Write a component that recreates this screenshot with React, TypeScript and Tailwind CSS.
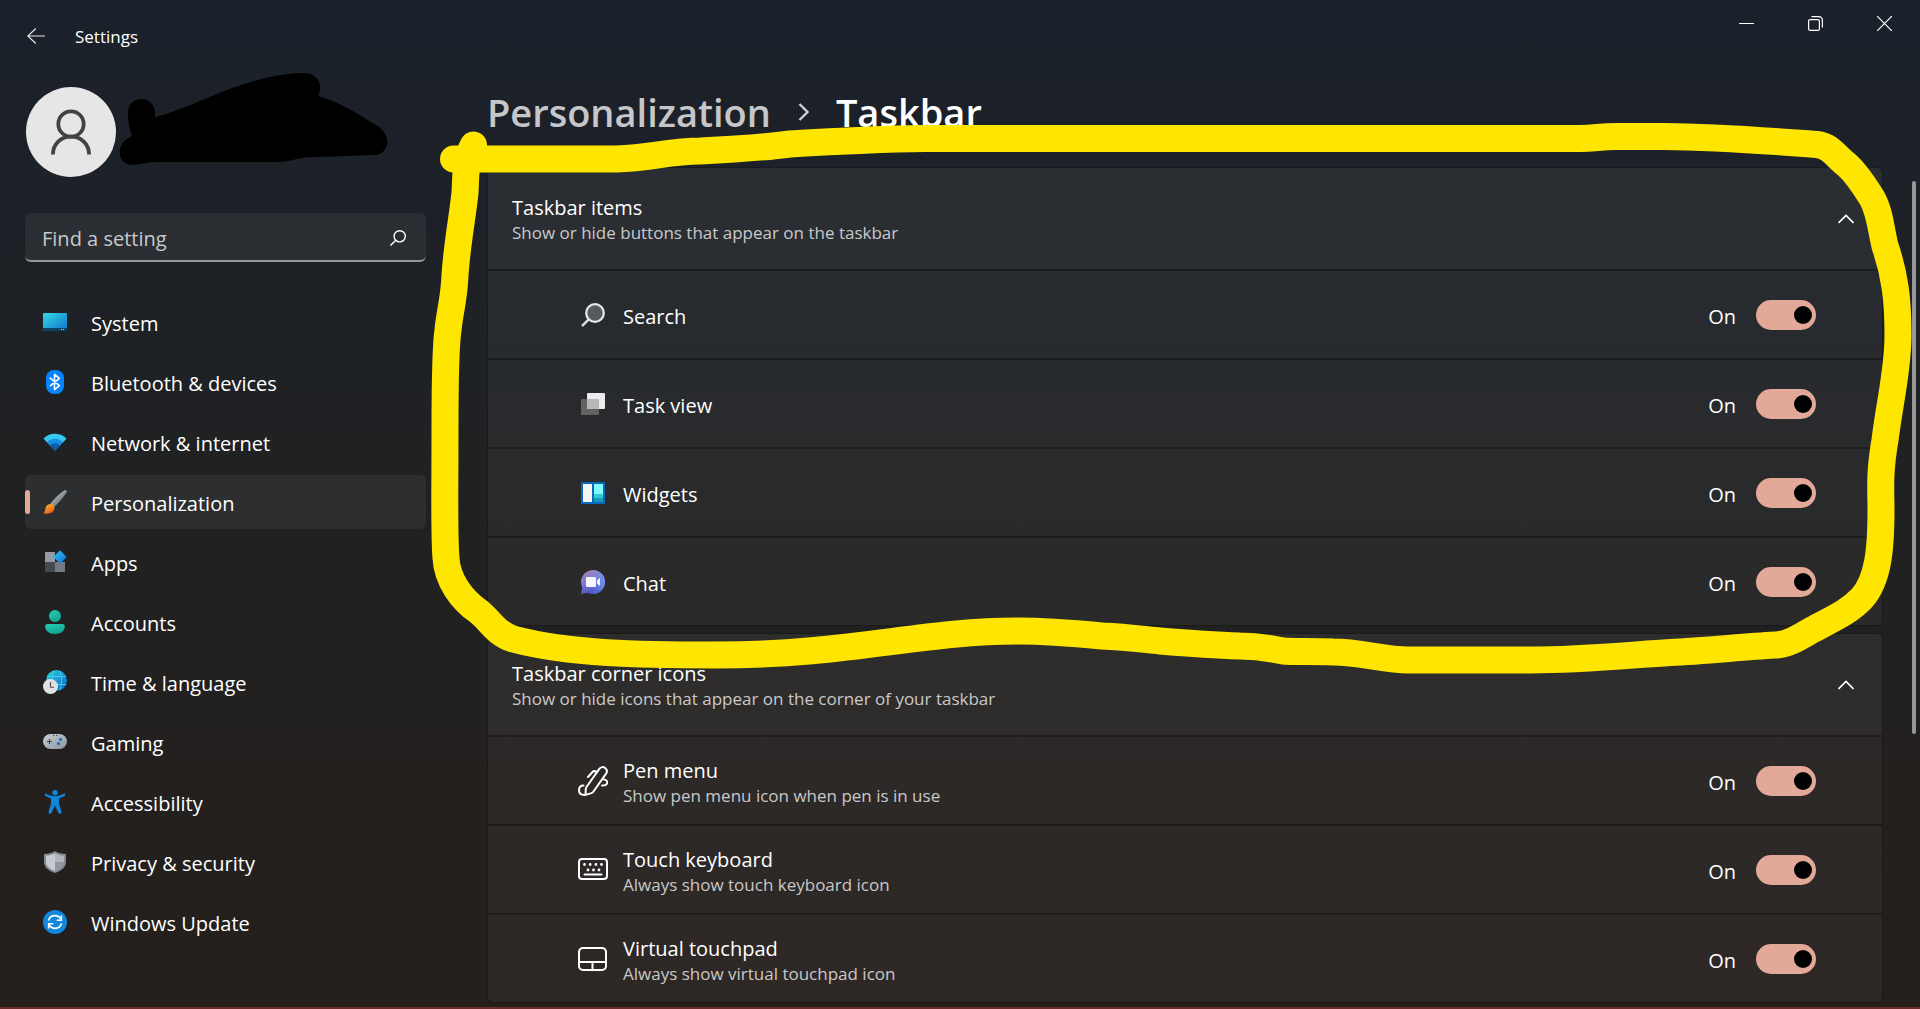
import { useState, type ReactNode } from "react";

/* ---------- Sidebar icons ---------- */

const SystemIcon = () => (
    <svg width="24" height="24" viewBox="0 0 24 24" aria-hidden="true">
        <defs>
            <linearGradient id="sys" x1="0" y1="0" x2="1" y2="1">
                <stop offset="0" stopColor="#35dbe6" />
                <stop offset="1" stopColor="#0f6fc9" />
            </linearGradient>
        </defs>
        <rect y="3" width="24" height="18" rx="1" fill="url(#sys)" />
        <path d="M0 18h24v2a1 1 0 0 1-1 1H1a1 1 0 0 1-1-1z" fill="#0b4468" />
        <path d="M18 19h1v1h-1zM20 19h1v1h-1z" fill="#9fd4ee" />
    </svg>
);

const BluetoothIcon = () => (
    <svg width="24" height="24" viewBox="0 0 24 24" aria-hidden="true">
        <rect x="3" width="18" height="24" rx="8" fill="#0783ff" />
        <path d="M7.2 8.2l9.2 7.4-4.9 4V4.4l4.9 4-9.2 7.4" fill="none" stroke="#fff" strokeWidth="1.5" strokeLinejoin="round" strokeLinecap="round" />
    </svg>
);

const NetworkIcon = () => (
    <svg width="24" height="24" viewBox="0 0 24 24" aria-hidden="true">
        <path d="M.5 8.7C3.3 5.4 7.4 3.7 12 3.7s8.7 1.7 11.5 5L12 20.6z" fill="#38c8f4" />
        <path d="M4 12.3C6 9.9 8.8 8.7 12 8.7s6 1.2 8 3.6l-8 8.3z" fill="#1590e0" />
        <path d="M7.3 15.7c1.2-1.6 2.8-2.4 4.7-2.4s3.5.8 4.7 2.4L12 20.6z" fill="#0c5aa8" />
    </svg>
);

const BrushIcon = () => (
    <svg width="24" height="24" viewBox="0 0 24 24" aria-hidden="true">
        <defs>
            <linearGradient id="handle" x1="0" y1="0" x2="1" y2="1">
                <stop offset="0.3" stopColor="#a9b1b9" />
                <stop offset="0.8" stopColor="#606b76" />
            </linearGradient>
            <linearGradient id="tip" x1="0" y1="0" x2="0.6" y2="1">
                <stop offset="0" stopColor="#ffc233" />
                <stop offset="1" stopColor="#ee5a1c" />
            </linearGradient>
        </defs>
        <path d="M7.5 13.5C11.5 8.5 16.5 3.5 21.5.2c1.3-.6 2.8.7 2.2 2.1C20.6 7.5 16 12.5 11.2 17z" fill="url(#handle)" />
        <path d="M7 14c2.4-.6 4.9 1.7 4.5 4.6C11 22.5 6.5 24.5.3 23.3c1.9-1.1 1.5-3 2.2-5.3C3.2 15.8 4.8 14.3 7 14z" fill="url(#tip)" />
    </svg>
);

const AppsIcon = () => (
    <svg width="24" height="24" viewBox="0 0 24 24" aria-hidden="true">
        <defs>
            <linearGradient id="diamond" x1="0" y1="0" x2="1" y2="1">
                <stop offset="0" stopColor="#35c4f5" />
                <stop offset="1" stopColor="#0b6fd2" />
            </linearGradient>
        </defs>
        <path d="M3 2h9v10H2V3a1 1 0 0 1 1-1z" fill="#959ba5" />
        <path d="M2 12h10v10H3a1 1 0 0 1-1-1z" fill="#454a50" />
        <path d="M12 12h10v9a1 1 0 0 1-1 1h-9z" fill="#747b84" />
        <path d="M17 .3l6.7 6.7L17 13.7 10.3 7z" fill="url(#diamond)" />
    </svg>
);

const AccountsIcon = () => (
    <svg width="24" height="24" viewBox="0 0 24 24" aria-hidden="true">
        <defs>
            <linearGradient id="person" x1="0" y1="0" x2="0.5" y2="1">
                <stop offset="0" stopColor="#25cdb6" />
                <stop offset="1" stopColor="#13a48f" />
            </linearGradient>
        </defs>
        <circle cx="12" cy="6" r="6" fill="url(#person)" />
        <path d="M4.5 14h15a2.3 2.3 0 0 1 2.3 2.3C21.8 21 18 24 12 24s-9.8-3-9.8-7.7A2.3 2.3 0 0 1 4.5 14z" fill="url(#person)" />
    </svg>
);

const TimeIcon = () => (
    <svg width="24" height="24" viewBox="0 0 24 24" aria-hidden="true">
        <defs>
            <linearGradient id="globe" x1="0" y1="0" x2="1" y2="1">
                <stop offset="0" stopColor="#2fd0da" />
                <stop offset="1" stopColor="#0b67cc" />
            </linearGradient>
        </defs>
        <circle cx="13.5" cy="10.5" r="10.5" fill="url(#globe)" />
        <path d="M4 6.5h19M4 14.5h19M10.5 1c-2 6-2 13 0 19M17 1c2 6 2 13 0 19" fill="none" stroke="#3fdcec" strokeWidth="1" opacity=".8" />
        <circle cx="7.5" cy="16.5" r="7.5" fill="#dfe0e2" />
        <path d="M7.5 12v5.2h3.5" fill="none" stroke="#4a4d52" strokeWidth="1.1" />
    </svg>
);

const GamingIcon = () => (
    <svg width="24" height="24" viewBox="0 0 24 24" aria-hidden="true">
        <defs>
            <linearGradient id="pad" x1="0" y1="0" x2="1" y2="1">
                <stop offset="0" stopColor="#c8ced4" />
                <stop offset="1" stopColor="#8d949c" />
            </linearGradient>
        </defs>
        <rect y="4" width="24" height="15" rx="7.5" fill="url(#pad)" />
        <path d="M4 11.5h5M6.5 9v5" stroke="#3b3f44" strokeWidth="1.1" />
        <path d="M10 5h1.2v1H10zM13 5h1.2v1H13z" fill="#3b3f44" />
        <circle cx="17.5" cy="9.5" r="1.6" fill="#0a74d4" />
        <circle cx="15.5" cy="13.5" r="1.6" fill="#0a74d4" />
    </svg>
);

const AccessibilityIcon = () => (
    <svg width="24" height="24" viewBox="0 0 24 24" fill="#0f86dc" aria-hidden="true">
        <circle cx="12" cy="2.7" r="2.7" />
        <path d="M3.2 3.7C6 5 9 6.2 12 6.2s6-1.2 8.8-2.5c1.3-.5 2 1.5.8 2.2L16 8.5v5l2.4 8.3c.5 1.9-2.2 2.9-3 1L12.3 16h-.6l-3.1 6.8c-.8 1.9-3.5.9-3-1L8 13.5v-5L2.4 5.9C1.2 5.2 1.9 3.2 3.2 3.7z" />
    </svg>
);

const ShieldIcon = () => (
    <svg width="24" height="24" viewBox="0 0 24 24" aria-hidden="true">
        <path d="M12 1c3.2 2.2 6.8 3 11 3v7.5c0 5.5-4 9.2-11 11.5C5 20.7 1 17 1 11.5V4c4.2 0 7.8-.8 11-3z" fill="#858b92" />
        <path d="M12 3.3c2.8 1.7 5.6 2.4 9 2.5V12H12z" fill="#b0b5bb" />
        <path d="M12 3.3C9.2 5 6.4 5.7 3 5.8v5.7c0 4.3 3 7.4 9 9.5z" fill="#c6cbd2" />
        <path d="M12 12h9c-.2 4.3-3.3 7.1-9 9z" fill="#93989f" />
    </svg>
);

const UpdateIcon = () => (
    <svg width="24" height="24" viewBox="0 0 24 24" aria-hidden="true">
        <circle cx="12" cy="12" r="12" fill="#0f88de" />
        <path d="M5.5 10.5C6.4 7.5 9 5.7 12 5.7c2.6 0 4.7 1.2 6 3.3M18.5 13.5c-.9 3-3.5 4.8-6.5 4.8-2.6 0-4.7-1.2-6-3.3" fill="none" stroke="#fff" strokeWidth="1.7" />
        <path d="M18.4 5.5v4.7h-4.7M5.6 18.5v-4.7h4.7" fill="none" stroke="#fff" strokeWidth="1.5" />
    </svg>
);

/* ---------- Row icons ---------- */

const SearchItemIcon = () => (
    <svg width="24" height="24" viewBox="0 0 24 24" aria-hidden="true">
        <path d="M1.7 22.3l6.5-6.5" stroke="#d9d9da" strokeWidth="2.6" strokeLinecap="round" />
        <circle cx="14" cy="10" r="8.8" fill="#575a61" stroke="#e8e8e9" strokeWidth="2.3" />
    </svg>
);

const TaskViewIcon = () => (
    <svg width="24" height="24" viewBox="0 0 24 24" aria-hidden="true">
        <rect x="6" y="1" width="18" height="16" rx="1" fill="#ececee" />
        <rect x="0" y="7" width="18" height="16" rx="1" fill="#626262" />
        <path d="M6 7h12v10H6z" fill="#b8b8b9" />
    </svg>
);

const WidgetsIcon = () => (
    <svg width="24" height="24" viewBox="0 0 24 24" aria-hidden="true">
        <rect y="1" width="24" height="22" rx="1" fill="#0a69bb" />
        <rect x="2" y="3" width="9" height="18" rx=".5" fill="#f4f4f5" />
        <path d="M13 3h9v10h-9z" fill="#7ffbff" />
        <path d="M13 13h9v4h-9z" fill="#30c9d8" />
        <path d="M13 17h9v4h-9z" fill="#149bb5" />
    </svg>
);

const ChatIcon = () => (
    <svg width="24" height="24" viewBox="0 0 24 24" aria-hidden="true">
        <defs>
            <linearGradient id="bubble" x1="0.2" y1="0" x2="0.6" y2="1">
                <stop offset="0" stopColor="#a585bb" />
                <stop offset="0.5" stopColor="#7a78cf" />
                <stop offset="1" stopColor="#4546bd" />
            </linearGradient>
            <linearGradient id="bubbleEdge" x1="0.4" y1="0" x2="1" y2="0">
                <stop offset="0" stopColor="#6f9cf2" stopOpacity="0" />
                <stop offset="1" stopColor="#6f9cf2" />
            </linearGradient>
        </defs>
        <path d="M12 0a12 12 0 1 1-5.4 22.7L0 24l1.3-6.6A12 12 0 0 1 12 0z" fill="url(#bubble)" />
        <circle cx="12" cy="12" r="12" fill="url(#bubbleEdge)" opacity=".8" />
        <rect x="5" y="7" width="10" height="10" rx="1.3" fill="#f6f5fb" />
        <path d="M16 10.5L19 8v8l-3-2.5z" fill="#f6f5fb" />
    </svg>
);

const PenIcon = () => (
    <svg width="30" height="30" viewBox="0 0 30 30" fill="none" stroke="#fff" strokeWidth="2" strokeLinecap="round" strokeLinejoin="round" aria-hidden="true">
        <path d="M8.5 21L21.3 2.8c1.5-2 4-2.2 5.8-.8s2.2 3.8 1 5.6L15.5 25.5c-.5.8-1.2 1.3-2 1.6L7.5 28.9l.3-6.2c0-.6.3-1.2.7-1.7z" />
        <path d="M10 11l4.500-5c1-1.100 2.600-1 4-.2M26 13.500c3 .3 4 2.500 2.700 4.500-.8 1.300-2.700 1.700-4.700 1.400M5.500 19.500C2.800 19.500 1 21.500 1 24.300s2 4.600 5.500 4.600" />
    </svg>
);

const KeyboardIcon = () => (
    <svg width="30" height="30" viewBox="0 0 30 30" fill="none" stroke="#fff" strokeLinecap="round" aria-hidden="true">
        <rect x="1" y="4" width="28" height="20" rx="3" strokeWidth="2" />
        <path d="M6.5 19.5h17" strokeWidth="2" />
        <path d="M6.5 9.5h.01M12.2 9.5h.01M17.9 9.5h.01M23.5 9.5h.01M10 15h.01M15.5 15h.01M21 15h.01" strokeWidth="2.8" />
    </svg>
);

const TouchpadIcon = () => (
    <svg width="30" height="30" viewBox="0 0 30 30" fill="none" stroke="#fff" strokeWidth="2" aria-hidden="true">
        <rect x="1" y="4" width="27" height="22" rx="4" />
        <path d="M1 18h27M14.5 18v8" />
    </svg>
);

/* ---------- Data ---------- */

type Item = {
    icon: ReactNode;
    title: string;
    description?: string;
};

const navItems: Item[] = [
    { icon: <SystemIcon />, title: "System" },
    { icon: <BluetoothIcon />, title: "Bluetooth & devices" },
    { icon: <NetworkIcon />, title: "Network & internet" },
    { icon: <BrushIcon />, title: "Personalization" },
    { icon: <AppsIcon />, title: "Apps" },
    { icon: <AccountsIcon />, title: "Accounts" },
    { icon: <TimeIcon />, title: "Time & language" },
    { icon: <GamingIcon />, title: "Gaming" },
    { icon: <AccessibilityIcon />, title: "Accessibility" },
    { icon: <ShieldIcon />, title: "Privacy & security" },
    { icon: <UpdateIcon />, title: "Windows Update" },
];

const taskbarItems: Item[] = [
    { icon: <SearchItemIcon />, title: "Search" },
    { icon: <TaskViewIcon />, title: "Task view" },
    { icon: <WidgetsIcon />, title: "Widgets" },
    { icon: <ChatIcon />, title: "Chat" },
];

const cornerIcons: Item[] = [
    { icon: <PenIcon />, title: "Pen menu", description: "Show pen menu icon when pen is in use" },
    { icon: <KeyboardIcon />, title: "Touch keyboard", description: "Always show touch keyboard icon" },
    { icon: <TouchpadIcon />, title: "Virtual touchpad", description: "Always show virtual touchpad icon" },
];

/* ---------- Components ---------- */

function SettingRow({ icon, title, description }: Item) {
    const [on, setOn] = useState(true);

    return (
        <label className="flex h-[87px] items-center bg-white/6 pl-[90px] pr-[66px]">
            <span className="flex w-[30px] justify-center">{icon}</span>
            <span className="flex flex-1 flex-col pl-[15px] pt-1">
                <span className="text-[20px] leading-[26px]">{title}</span>
                {description && (
                    <span className="text-[17px] leading-6 text-white/75">{description}</span>
                )}
            </span>
            <span className="pr-5 pt-1 text-[20px] leading-[26px]">{on ? "On" : "Off"}</span>
            <input
                type="checkbox"
                role="switch"
                checked={on}
                onChange={(e) => setOn(e.target.checked)}
                className="flex h-[30px] w-[60px] appearance-none items-center rounded-full border border-white/60 px-1 before:size-[18px] before:rounded-full before:bg-white/80 checked:justify-end checked:border-0 checked:bg-[#e2a999] checked:before:bg-black"
            />
        </label>
    );
}

function SettingGroup({ title, description, items }: { title: string; description: string; items: Item[] }) {
    const [open, setOpen] = useState(true);

    return (
        <section className="flex flex-col gap-0.5 overflow-hidden rounded-md border border-black/10 bg-black/10">
            <button
                type="button"
                aria-expanded={open}
                onClick={() => setOpen(!open)}
                className="flex h-[101px] items-center justify-between bg-white/7 pl-6 pr-7 text-left"
            >
                <span className="flex flex-col pt-0.5">
                    <span className="text-[20px] leading-[26px]">{title}</span>
                    <span className="text-[17px] leading-6 text-white/75">{description}</span>
                </span>
                <svg
                    width="16"
                    height="10"
                    viewBox="0 0 16 10"
                    fill="none"
                    stroke="#fff"
                    strokeWidth="1.6"
                    className={open ? "" : "rotate-180"}
                    aria-hidden="true"
                >
                    <path d="M.5 9L8 1.5 15.5 9" />
                </svg>
            </button>
            {open && items.map((item) => <SettingRow key={item.title} {...item} />)}
        </section>
    );
}

function TitleBar() {
    const control = "flex h-[47px] w-[69px] items-center justify-center hover:bg-white/10";

    return (
        <header className="flex h-[72px] items-center">
            <button type="button" aria-label="Back" className="ml-[27px] flex h-[30px] w-[18px] items-center">
                <svg width="18" height="16" viewBox="0 0 18 16" fill="none" stroke="#e4e5e6" strokeWidth="1.2" aria-hidden="true">
                    <path d="M18 8H.8M8.8.5L.8 8l8 7.5" />
                </svg>
            </button>
            <h1 className="flex-1 pl-[30px] pt-0.5 text-[17px] leading-6">Settings</h1>
            <div className="mr-px flex self-start">
                <button type="button" aria-label="Minimize" className={control}>
                    <svg width="15" height="15" viewBox="0 0 15 15" stroke="#fff" aria-hidden="true">
                        <path d="M0 7.5h15" />
                    </svg>
                </button>
                <button type="button" aria-label="Restore" className={control}>
                    <svg width="15" height="15" viewBox="0 0 15 15" fill="none" stroke="#fff" strokeWidth="1.2" aria-hidden="true">
                        <rect x=".6" y="3.6" width="10.8" height="10.8" rx="1.5" />
                        <path d="M3.5 .6h7.4a3.5 3.5 0 0 1 3.5 3.5v7.4" />
                    </svg>
                </button>
                <button type="button" aria-label="Close" className={control}>
                    <svg width="15" height="15" viewBox="0 0 15 15" stroke="#fff" strokeWidth="1.2" aria-hidden="true">
                        <path d="M0 0l15 15M15 0L0 15" />
                    </svg>
                </button>
            </div>
        </header>
    );
}

function Sidebar() {
    const [active, setActive] = useState("Personalization");

    return (
        <aside className="w-[401px] shrink-0 pt-[15px]">
            <div className="ml-px flex size-[90px] items-center justify-center rounded-full bg-[#e6e6e6]">
                <svg width="40" height="46" viewBox="0 0 40 46" fill="none" stroke="#424242" strokeWidth="3.8" aria-hidden="true">
                    <circle cx="20" cy="15" r="12.7" />
                    <path d="M1.9 45.5C1.9 35 10 27.7 20 27.7S38.1 35 38.1 45.5" />
                </svg>
            </div>

            <div className="mt-9 flex h-[49px] items-center rounded-md border-b-2 border-[#96989b] bg-white/6 pl-[17px] pr-5">
                <input
                    type="text"
                    aria-label="Find a setting"
                    placeholder="Find a setting"
                    className="min-w-0 flex-1 bg-transparent pt-1 text-[20px] leading-[26px] outline-none placeholder:text-white/75"
                />
                <svg width="16" height="16" viewBox="0 0 16 16" fill="none" stroke="#fff" strokeWidth="1.4" className="mt-0.5" aria-hidden="true">
                    <circle cx="9.7" cy="6.3" r="5.6" />
                    <path d="M.5 15.5l5-5" />
                </svg>
            </div>

            <nav className="mt-[33px] flex flex-col gap-1.5">
                {navItems.map((item) => (
                    <a
                        key={item.title}
                        href="#"
                        onClick={(e) => {
                            e.preventDefault();
                            setActive(item.title);
                        }}
                        className={`flex h-[54px] items-center rounded-md ${active === item.title ? "bg-white/6" : "hover:bg-white/5"}`}
                    >
                        <span className={`h-6 w-[5px] rounded-full ${active === item.title ? "bg-[#e2a999]" : ""}`} />
                        <span className="pl-[13px]">{item.icon}</span>
                        <span className="pl-6 pt-1 text-[20px] leading-[26px]">{item.title}</span>
                    </a>
                ))}
            </nav>
        </aside>
    );
}

/* Marker strokes drawn over the window */
function MarkerOverlay() {
    return (
        <svg viewBox="0 0 1920 1009" className="pointer-events-none absolute left-0 top-0 w-full" fill="none" aria-hidden="true">
            <path
                d="M128 113C128 104 134 99 141.5 99S155 105 155 113V117C180 111 205 98 232 88C260 78 285 73 304 73C317 73 324 84 318 96C340 102 360 115 379 127C393 138 388 155 374 155L305 157.5C295 159 288 162 278 162H155C147 162 140 165 132 165C116 164 115 143 132 136C129 128 128 121 128 113Z"
                fill="#000"
            />
            <path
                d="M453.5 159H617C650 158 670 151 700 151C740 149 760 148 790 144C840 141 880 139 925 138.5H1580C1595 138.5 1600 136.5 1616 136.5H1664C1720 137 1770 141 1817 144.5C1831 146 1836 157 1847 165C1858 175 1865 187 1872 198C1880 212 1881 230 1885 246C1895 275 1898 300 1898 335C1898 370 1890 400 1885 440C1879 475 1881 490 1881 510C1881 550 1878 580 1862 598C1848 613 1830 620 1812 630C1800 637 1788 645 1775 645C1740 647 1705 651 1670 652.5C1630 655 1580 660 1531 660H1408C1385 660 1360 652 1333 652C1310 651 1295 652 1283 651C1270 649 1262 646 1240 646C1213 645 1185 643 1160 641C1140 639 1125 637 1102 636C1070 633 1045 631 1019 631C920 631 850 655 715 655C640 655 570 654 513 639C495 633 490 620 478 611C462 600 447 580 446 558C444 535 445 500 445 430C445 390 445 350 448 330C450 310 454 300 455 275C457 245 462 220 465 193C466 175 465 160 473.5 145"
                stroke="#ffe600"
                strokeWidth="27"
                strokeLinecap="round"
                strokeLinejoin="round"
            />
        </svg>
    );
}

export default function App() {
    return (
        <div className="relative flex min-h-screen flex-col overflow-hidden border-b-2 border-[#6b2d2a] bg-linear-to-b from-[#1b212b] via-[#202122] to-[#251f1b] font-['Open_Sans','Noto_Sans',sans-serif] text-white">
            <TitleBar />

            <div className="flex flex-1 pl-[25px] pr-[37px]">
                <Sidebar />

                <main className="flex-1 pb-1 pl-[61px] pt-2.5">
                    <h2 className="flex h-[60px] items-center text-[38px] font-semibold leading-[60px]">
                        <a href="#" className="text-white/75">Personalization</a>
                        <svg width="11" height="18" viewBox="0 0 11 18" className="mx-[27px]" fill="none" stroke="#cfd0d2" strokeWidth="2.4" aria-hidden="true">
                            <path d="M1.5 1l8 8-8 8" />
                        </svg>
                        <span>Taskbar</span>
                    </h2>

                    <div className="mt-[25px] flex flex-col gap-[7px]">
                        <SettingGroup
                            title="Taskbar items"
                            description="Show or hide buttons that appear on the taskbar"
                            items={taskbarItems}
                        />
                        <SettingGroup
                            title="Taskbar corner icons"
                            description="Show or hide icons that appear on the corner of your taskbar"
                            items={cornerIcons}
                        />
                    </div>
                </main>
            </div>

            {/* Scrollbar thumb */}
            <div className="absolute right-1 top-[181px] h-[553px] w-1 rounded-full bg-[#979797]" />

            <MarkerOverlay />
        </div>
    );
}
